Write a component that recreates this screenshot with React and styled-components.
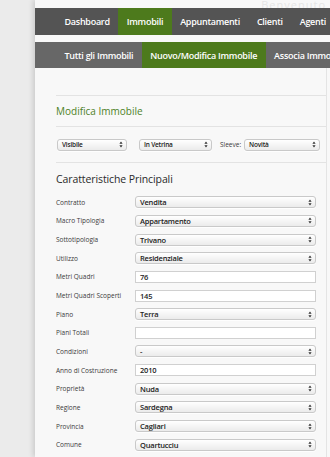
import styled, { createGlobalStyle } from 'styled-components'

const GlobalStyle = createGlobalStyle`
    body {
        margin: 0;
        background: #ebebeb;
        font-family: "Open Sans", "DejaVu Sans", sans-serif;
        overflow: hidden;
    }
`

const menu = ["Dashboard", "Immobili", "Appuntamenti", "Clienti", "Agenti"]
const sottoMenu = ["Tutti gli Immobili", "Nuovo/Modifica Immobile", "Associa Immobili"]

const campi = [
    { label: "Contratto", tipo: "select", valore: "Vendita" },
    { label: "Macro Tipologia", tipo: "select", valore: "Appartamento" },
    { label: "Sottotipologia", tipo: "select", valore: "Trivano" },
    { label: "Utilizzo", tipo: "select", valore: "Residenziale" },
    { label: "Metri Quadri", tipo: "input", valore: "76" },
    { label: "Metri Quadri Scoperti", tipo: "input", valore: "145" },
    { label: "Piano", tipo: "select", valore: "Terra" },
    { label: "Piani Totali", tipo: "input", valore: "" },
    { label: "Condizioni", tipo: "select", valore: "-" },
    { label: "Anno di Costruzione", tipo: "input", valore: "2010" },
    { label: "Proprietà", tipo: "select", valore: "Nuda" },
    { label: "Regione", tipo: "select", valore: "Sardegna" },
    { label: "Provincia", tipo: "select", valore: "Cagliari" },
    { label: "Comune", tipo: "select", valore: "Quartucciu" },
    { label: "Indirizzo", tipo: "input", valore: "" },
]

const Pagina = styled.div`
    display: flex;
    height: 457px;
`

const Margine = styled.div`
    width: 35px;
    flex-shrink: 0;
    background: #ebebeb;
`

const Pannello = styled.div`
    flex: 1;
    background: #f8f8f8;
    box-shadow: -2px 0 5px rgba(0, 0, 0, 0.14);
    overflow: hidden;
`

const Testata = styled.div`
    height: 8px;
    overflow: hidden;
    display: flex;
    justify-content: flex-end;
    align-items: flex-end;
    padding-right: 4px;
    color: #e6e6e6;
    font-size: 11px;
    line-height: 6px;
    letter-spacing: 1px;
`

const Barra = styled.ul`
    display: flex;
    margin: ${p => p.$sotto ? '7px 0 0' : '0'};
    padding: 0 0 0 21px;
    list-style: none;
    height: ${p => p.$sotto ? '26px' : '27px'};
    background: ${p => p.$sotto ? '#676767' : '#545454'};
    white-space: nowrap;
`

const Voce = styled.li`
    display: flex;
    align-items: center;
    padding: 0 8.5px;
    background: ${p => p.$attivo ? '#4d7a1c' : 'transparent'};
    color: #fff;
    font-size: 9px;
    font-weight: 600;
    letter-spacing: -0.27px;
`

const Contenuto = styled.div`
    padding: 27px 0 0 21px;
    border-right: 1px solid #e4e4e4;
    margin-right: 3px;
`

const Sezione = styled.div`
    display: flex;
    align-items: center;
    height: ${p => p.$alto}px;
    border-top: ${p => p.$lineaSopra ? '1px solid #e3e3e3' : 'none'};
    border-bottom: 1px solid #e3e3e3;
`

const Titolo = styled.h2`
    margin: 0;
    color: #4e8227;
    font-size: 10px;
    font-weight: 400;
`

const Sottotitolo = styled.h3`
    margin: 0;
    padding: 7px 0 5px;
    color: #2a2a2a;
    font-size: 10.5px;
    font-weight: 400;
    line-height: 18px;
    letter-spacing: -0.1px;
`

const Etichetta = styled.span`
    color: #3a3a3a;
    font-size: 6.5px;
    margin: ${p => p.$margine || 0};
`

const Tendina = styled.div`
    display: flex;
    align-items: center;
    justify-content: space-between;
    box-sizing: border-box;
    width: ${p => p.$largo}px;
    height: 12px;
    margin: ${p => p.$margine || 0};
    padding: 0 3px 0 4px;
    border: 1px solid #c9c9c9;
    border-radius: 3px;
    background: linear-gradient(#ffffff, #ebebeb);
    box-shadow: 0 1px 0 rgba(255, 255, 255, 0.8);
    color: #222;
    font-size: ${p => p.$piccolo ? 6.5 : 7.5}px;
    font-weight: 600;
    letter-spacing: -0.2px;
`

const Casella = styled.div`
    display: flex;
    align-items: center;
    box-sizing: border-box;
    width: 181px;
    height: 12px;
    padding: 0 4px;
    border: 1px solid #d0d0d0;
    background: #fff;
    color: #222;
    font-size: 7.5px;
    font-weight: 600;
    letter-spacing: -0.2px;
`

const Griglia = styled.div`
    display: grid;
    grid-template-columns: 79px 181px;
    grid-auto-rows: 18.65px;
    align-items: center;
`

const Frecce = () => (
    <svg width="4" height="7" viewBox="0 0 4 7">
        <path d="M2 0.5 L3.6 2.8 H0.4 Z M2 6.5 L3.6 4.2 H0.4 Z" fill="#333" />
    </svg>
)

const Selezione = ({ valore, largo = 181, piccolo, margine }) => (
    <Tendina $largo={largo} $piccolo={piccolo} $margine={margine}>
        <span>{valore}</span>
        <Frecce />
    </Tendina>
)

const App = () => {
    return (
        <>
            <GlobalStyle />
            <Pagina>
                <Margine />
                <Pannello>
                    <Testata>Benvenuto</Testata>
                    <Barra>
                        {menu.map((voce) => (
                            <Voce key={voce} $attivo={voce === "Immobili"}>{voce}</Voce>
                        ))}
                    </Barra>
                    <Barra $sotto>
                        {sottoMenu.map((voce) => (
                            <Voce key={voce} $attivo={voce.startsWith("Nuovo")}>{voce}</Voce>
                        ))}
                    </Barra>
                    <Contenuto>
                        <Sezione $alto={30} $lineaSopra>
                            <Titolo>Modifica Immobile</Titolo>
                        </Sezione>
                        <Sezione $alto={35}>
                            <Selezione valore="Visibile" largo={70} piccolo margine="0 12px 0 1px" />
                            <Selezione valore="In Vetrina" largo={73} piccolo />
                            <Etichetta $margine="0 3px 0 8px">Sleeve:</Etichetta>
                            <Selezione valore="Novità" largo={76} piccolo />
                        </Sezione>
                        <Sottotitolo>Caratteristiche Principali</Sottotitolo>
                        <Griglia>
                            {campi.map((campo) => (
                                <>
                                    <Etichetta key={campo.label}>{campo.label}</Etichetta>
                                    {campo.tipo === "select"
                                        ? <Selezione valore={campo.valore} />
                                        : <Casella>{campo.valore}</Casella>}
                                </>
                            ))}
                        </Griglia>
                    </Contenuto>
                </Pannello>
            </Pagina>
        </>
    )
}

export default App
